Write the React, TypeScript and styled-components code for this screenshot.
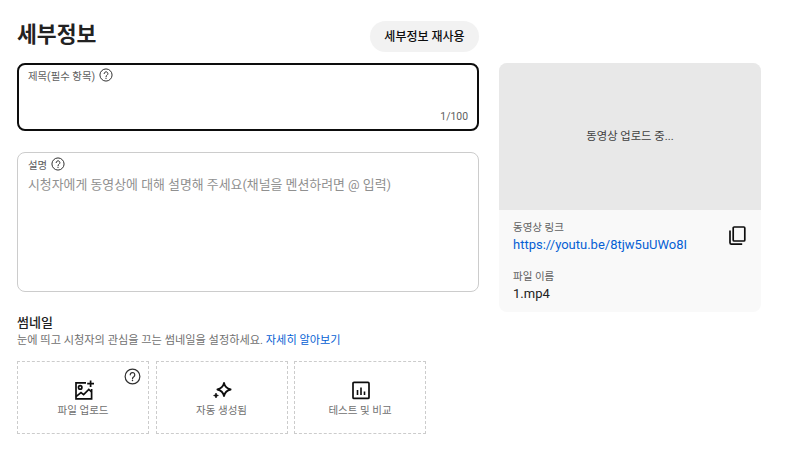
import React from "react";
import styled, { createGlobalStyle } from "styled-components";

const GlobalStyle = createGlobalStyle`
  html, body {
    margin: 0;
    padding: 0;
    background: #fff;
    font-family: Roboto, "Noto Sans CJK KR", sans-serif;
    color: #0d0d0d;
  }
  * { box-sizing: border-box; }
`;

const Page = styled.div`
  width: 788px;
  height: 450px;
  overflow: hidden;
  display: flex;
  gap: 20px;
  padding: 21px 0 0 17px;
`;

const Main = styled.div`
  width: 462px;
  display: flex;
  flex-direction: column;
`;

const Header = styled.div`
  height: 31px;
  display: flex;
  align-items: center;
  justify-content: space-between;
  margin-bottom: 11px;
`;

const Title = styled.h1`
  margin: -3px 0 0;
  font-size: 21.6px;
  line-height: 26px;
  font-weight: 700;
  color: #222;
`;

const ReuseButton = styled.button`
  width: 109px;
  height: 31px;
  border: none;
  border-radius: 16px;
  background: #f2f2f2;
  color: #0d0d0d;
  font-family: inherit;
  font-size: 12px;
  font-weight: 500;
  padding: 0 0 2px;
`;

const Field = styled.div<{ $focused?: boolean; $height: number }>`
  position: relative;
  height: ${(p) => p.$height}px;
  border: ${(p) => (p.$focused ? "2px solid #0d0d0d" : "1px solid #ccc")};
  border-radius: 8px;
  padding: ${(p) => (p.$focused ? "2px 9px" : "3px 10px")};
  margin-bottom: ${(p) => (p.$focused ? 21 : 22)}px;
`;

const FieldLabel = styled.div`
  display: flex;
  align-items: center;
  gap: 4px;
  height: 16px;
  font-size: 10.4px;
  color: #606060;
`;

const Placeholder = styled.div`
  margin-top: 4px;
  font-size: 12.9px;
  line-height: 18px;
  color: #909090;
`;

const Counter = styled.div`
  position: absolute;
  right: 9px;
  bottom: 5px;
  font-size: 10.4px;
  line-height: 14px;
  color: #606060;
`;

const SectionTitle = styled.div`
  font-size: 13px;
  line-height: 18px;
  font-weight: 500;
  color: #222;
`;

const SectionHint = styled.div`
  margin-top: 1px;
  font-size: 11.2px;
  line-height: 16px;
  color: #707070;
`;

const LearnMore = styled.a`
  color: #065fd4;
`;

const Tiles = styled.div`
  display: flex;
  gap: 6.5px;
  margin-top: 12px;
`;

const Tile = styled.div`
  position: relative;
  width: 132px;
  height: 73px;
  border: 1px dashed #ccc;
  display: flex;
  flex-direction: column;
  align-items: center;
  padding-top: 18px;
  gap: 3px;
`;

const TileLabel = styled.div`
  font-size: 10.5px;
  line-height: 14px;
  color: #707070;
`;

const TileHelp = styled.div`
  position: absolute;
  top: 6px;
  right: 7px;
  display: flex;
`;

const Side = styled.aside`
  width: 262px;
  height: 249px;
  margin-top: 42px;
  border-radius: 8px;
  overflow: hidden;
  background: #f9f9f9;
`;

const Preview = styled.div`
  height: 147px;
  padding-bottom: 3px;
  background: #e8e8e8;
  display: flex;
  align-items: center;
  justify-content: center;
  font-size: 11.3px;
  color: #404040;
`;

const Info = styled.div`
  padding: 11px 14px;
`;

const LinkRow = styled.div`
  display: flex;
  justify-content: space-between;
  align-items: flex-start;
  margin-bottom: 15px;
`;

const InfoLabel = styled.div`
  font-size: 10.5px;
  line-height: 14px;
  color: #606060;
`;

const InfoLink = styled.a`
  display: block;
  font-size: 13px;
  line-height: 20px;
  color: #065fd4;
`;

const InfoValue = styled.div`
  font-size: 13px;
  line-height: 20px;
  color: #222;
`;

const CopyButton = styled.div`
  display: flex;
  margin: 5px -1px 0 0;
`;

const HelpIcon = ({ size }: { size: number }) => (
  <svg width={size} height={size} viewBox="0 0 24 24" fill="none" stroke="#303030" strokeWidth="1.7">
    <circle cx="12" cy="12" r="10.4" />
    <path d="M8.8 9.6a3.2 3.2 0 1 1 5 2.7c-1.1.7-1.8 1.4-1.8 2.7" strokeLinecap="round" />
    <circle cx="12" cy="17.7" r="1.1" fill="#303030" stroke="none" />
  </svg>
);

const ImageAddIcon = () => (
  <svg width="21" height="21" viewBox="0 0 21 21" fill="none" stroke="#0d0d0d" strokeWidth="1.7">
    <path d="M13 2.8H3v16h15.6V9" />
    <circle cx="7.2" cy="7.4" r="1.7" />
    <path d="M3 16.6l5-4 2.6 2 5.2-5.2 2.8 2.6" />
    <path d="M17.6 0.4v6.6M14.2 3.7h6.8" />
  </svg>
);

const SparkIcon = () => (
  <svg width="21" height="21" viewBox="0 0 21 21" fill="none">
    <path d="M13 2.9c.8 3.7 2.7 5.7 6.6 6.6-3.9.9-5.8 2.9-6.6 6.6-.8-3.7-2.7-5.7-6.6-6.6 3.9-.9 5.8-2.9 6.6-6.6z" stroke="#0d0d0d" strokeWidth="1.8" strokeLinejoin="round" />
    <path d="M5 13.2c.3 1.4.9 2 2.3 2.3-1.4.3-2 .9-2.3 2.3-.3-1.4-.9-2-2.3-2.3 1.4-.3 2-.9 2.3-2.3z" fill="#0d0d0d" stroke="#0d0d0d" />
  </svg>
);

const ChartIcon = () => (
  <svg width="21" height="21" viewBox="0 0 21 21" fill="none" stroke="#0d0d0d">
    <rect x="3" y="2.4" width="16" height="16" rx="1" strokeWidth="1.7" />
    <path d="M7.5 10v5M11 7.5v7.5M14.5 11.5V15" strokeWidth="1.6" />
  </svg>
);

const CopyIcon = () => (
  <svg width="20" height="20" viewBox="0 0 20 20" fill="none" stroke="#0d0d0d" strokeWidth="1.7">
    <rect x="5.2" y="1" width="11.6" height="14" rx="1" />
    <path d="M2 4.5v12.2a1.5 1.5 0 0 0 1.5 1.5h10.7" />
  </svg>
);

export default function App() {
  return (
    <>
      <GlobalStyle />
      <Page>
        <Main>
          <Header>
            <Title>세부정보</Title>
            <ReuseButton>세부정보 재사용</ReuseButton>
          </Header>

          <Field $focused $height={68}>
            <FieldLabel>
              제목(필수 항목) <HelpIcon size={14} />
            </FieldLabel>
            <Counter>1/100</Counter>
          </Field>

          <Field $height={140}>
            <FieldLabel>
              설명 <HelpIcon size={14} />
            </FieldLabel>
            <Placeholder>시청자에게 동영상에 대해 설명해 주세요(채널을 멘션하려면 @ 입력)</Placeholder>
          </Field>

          <SectionTitle>썸네일</SectionTitle>
          <SectionHint>
            눈에 띄고 시청자의 관심을 끄는 썸네일을 설정하세요. <LearnMore>자세히 알아보기</LearnMore>
          </SectionHint>

          <Tiles>
            <Tile>
              <ImageAddIcon />
              <TileLabel>파일 업로드</TileLabel>
              <TileHelp>
                <HelpIcon size={17} />
              </TileHelp>
            </Tile>
            <Tile>
              <SparkIcon />
              <TileLabel>자동 생성됨</TileLabel>
            </Tile>
            <Tile>
              <ChartIcon />
              <TileLabel>테스트 및 비교</TileLabel>
            </Tile>
          </Tiles>
        </Main>

        <Side>
          <Preview>동영상 업로드 중...</Preview>
          <Info>
            <LinkRow>
              <div>
                <InfoLabel>동영상 링크</InfoLabel>
                <InfoLink>https://youtu.be/8tjw5uUWo8I</InfoLink>
              </div>
              <CopyButton>
                <CopyIcon />
              </CopyButton>
            </LinkRow>
            <InfoLabel>파일 이름</InfoLabel>
            <InfoValue>1.mp4</InfoValue>
          </Info>
        </Side>
      </Page>
    </>
  );
}
